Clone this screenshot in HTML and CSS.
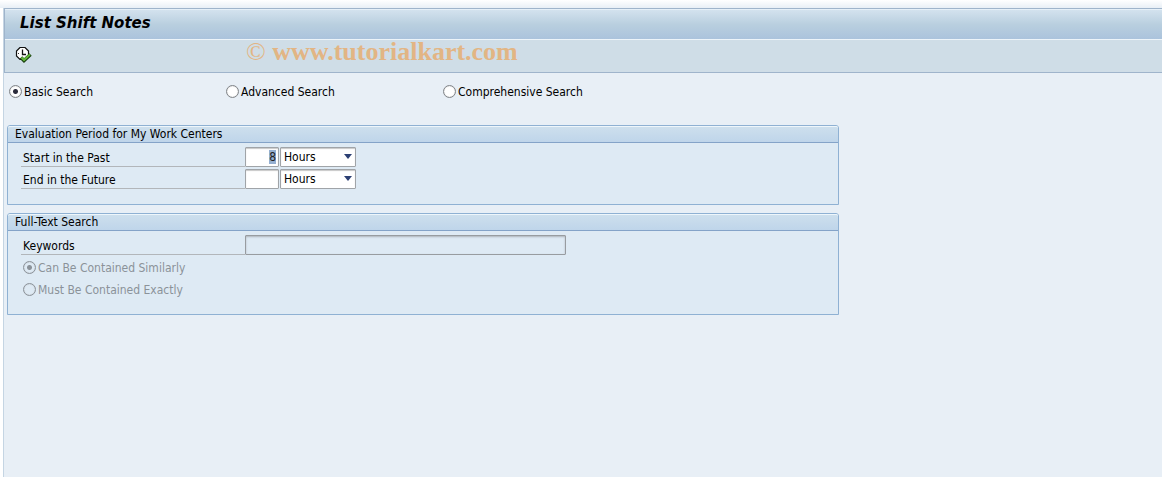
FILE: index.html
```html
<!DOCTYPE html>
<html lang="en">
	<head>
		<meta charset="UTF-8" />
		<meta name="viewport" content="width=device-width, initial-scale=1.0" />
		<title>List Shift Notes</title>
		<link rel="stylesheet" href="styles.css">
	</head>
	<body>
		<div class="window">
			<header class="header">
				<h1 class="title">List Shift Notes</h1>
				<div class="toolbar">
					<button class="execute" type="button" aria-label="Execute">
						<svg width="17" height="16" viewBox="0 0 17 16">
							<path d="M5 .5h5l3.500 3.500v5l-3.500 3.500H5L1.500 9V4z" fill="#fff" stroke="#111" stroke-width="1.200" />
							<path d="M7.500 2.500v5H11" fill="none" stroke="#111" stroke-width="1.300" />
							<path d="M3 6.500h1M7.500 10v1" stroke="#333" />
							<path d="M6 10.500l3 3 6.500-6" fill="none" stroke="#173c0c" stroke-width="3.500" />
							<path d="M6.500 10.500l2.500 2.500 6-5.500" fill="none" stroke="#62b83a" stroke-width="2" />
						</svg>
					</button>
					<span class="watermark">© <b>www.tutorialkart.com</b></span>
				</div>
			</header>

			<form class="content">
				<div class="search-modes">
					<label class="radio"><input type="radio" name="mode" checked>Basic Search</label>
					<label class="radio"><input type="radio" name="mode">Advanced Search</label>
					<label class="radio"><input type="radio" name="mode">Comprehensive Search</label>
				</div>

				<!-- Evaluation period -->
				<section class="panel">
					<h2 class="panel-title">Evaluation Period for My Work Centers</h2>
					<div class="panel-body">
						<div class="row">
							<label class="row-label" for="start">Start in the Past</label>
							<span class="field number"><input id="start" type="text" value="8"></span>
							<span class="field unit">
								<select aria-label="Start unit"><option>Hours</option></select>
							</span>
						</div>
						<div class="row">
							<label class="row-label" for="end">End in the Future</label>
							<span class="field number"><input id="end" type="text"></span>
							<span class="field unit">
								<select aria-label="End unit"><option>Hours</option></select>
							</span>
						</div>
					</div>
				</section>

				<!-- Full-text search -->
				<section class="panel">
					<h2 class="panel-title">Full-Text Search</h2>
					<div class="panel-body">
						<div class="row">
							<label class="row-label" for="keywords">Keywords</label>
							<span class="field keywords"><input id="keywords" type="text" disabled></span>
						</div>
						<label class="radio disabled"><input type="radio" name="match" checked disabled>Can Be Contained Similarly</label>
						<label class="radio disabled"><input type="radio" name="match" disabled>Must Be Contained Exactly</label>
					</div>
				</section>
			</form>
		</div>
		<script>
			// start value is preselected so it can be typed over
			document.getElementById("start").select();
		</script>
	</body>
</html>
```
FILE: styles.css
```css
* {
	box-sizing: border-box;
}

body {
	margin: 0;
	background: linear-gradient(#fff, #e8eff6 8px) no-repeat #fff;
	background-size: 100% 8px;
	padding: 8px 0 0 3px;
	font: 12px/16px "DejaVu Sans Condensed", "Noto Sans", sans-serif;
	color: #000;
}

.window {
	min-height: calc(100vh - 8px);
	border-left: 1px solid #c5d5e3;
	background: #e8eff6;
}

.header {
	border: solid #9fb4cb;
	border-width: 1px 0 1px 1px;
	background: #cfdde7;
}

.title {
	height: 30px;
	margin: 0;
	padding-left: 15px;
	border-top: 1px solid #e6f0f8;
	background: linear-gradient(#d3e2ee, #b9cfdf 50%, #abc3dc);
	font: italic bold 15px/26px "DejaVu Sans", sans-serif;
}

.toolbar {
	display: flex;
	align-items: flex-start;
	height: 33px;
	border-top: 1px solid #edf4f9;
}

.execute {
	width: 17px;
	height: 16px;
	margin: 7px 0 0 10px;
	padding: 0;
	border: 0;
	background: none;
}

.execute svg {
	display: block;
}

.watermark {
	margin-left: 214px;
	color: #e2b584;
	font: 26px/24px "Liberation Serif", serif;
}

.content {
	padding: 11px 3px;
}

.search-modes {
	display: grid;
	grid-template-columns: repeat(3, 217px);
	margin-bottom: 25px;
	padding-left: 2px;
}

.radio {
	display: flex;
	align-items: flex-start;
	gap: 2px;
}

.radio input {
	appearance: none;
	width: 13px;
	height: 13px;
	margin: 1px 0 0;
	border: 1px solid #808488;
	border-radius: 50%;
	background: #fff;
	box-shadow: inset 0 0 1px #aaa;
}

.radio input:checked {
	background: radial-gradient(circle, #2c2c3c 2px, #fff 3px);
}

.panel {
	max-width: 832px;
	margin-bottom: 8px;
	border: 1px solid #8fb1d3;
	border-radius: 3px 3px 0 0;
	background: #deeaf4;
}

.panel-title {
	height: 17px;
	margin: 0;
	padding-left: 7px;
	border-top: 1px solid #eef6fb;
	border-bottom: 1px solid #84a3c8;
	border-radius: 2px 2px 0 0;
	background: linear-gradient(#cddfed, #bfd5ea);
	font-size: 12px;
	font-weight: normal;
	line-height: 14px;
}

.panel-body {
	padding: 4px 13px 13px;
}

.row {
	display: flex;
	height: 20px;
	margin-bottom: 2px;
}

.row-label {
	width: 224px;
	padding: 3px 2px 0;
	border-bottom: 1px solid #b2b6ba;
	line-height: 16px;
}

.field {
	position: relative;
	height: 20px;
}

.field input,
.field select {
	display: block;
	width: 100%;
	height: 100%;
	margin: 0;
	padding: 0 3px;
	appearance: none;
	border: 1px solid #a0a4a8;
	border-radius: 1px;
	outline: none;
	background: #fff;
	box-shadow: inset 0 1px 1px #c8c8c8;
	color: #000;
	font: inherit;
}

.number {
	width: 34px;
	margin-right: 1px;
}

.number input {
	padding-right: 2px;
	text-align: right;
}

.field input::selection {
	background: #94afd1;
	color: #222;
}

.unit {
	width: 76px;
}

.unit::after {
	content: "";
	position: absolute;
	top: 7px;
	right: 4px;
	border: solid transparent;
	border-width: 5px 4px 0;
	border-top-color: #2b3f73;
	pointer-events: none;
}

.keywords {
	width: 321px;
}

.field input:disabled {
	border-color: #989ca0;
	background: #deeaf4;
	box-shadow: inset 0 1px 2px #aeb4ba;
}

.radio.disabled {
	height: 22px;
	padding: 3px 0 0 2px;
	color: #8b9299;
}

.radio.disabled input {
	border-color: #8b9299;
	background: #deeaf4;
}

.radio.disabled input:checked {
	background: radial-gradient(circle, #8b9299 2px, #deeaf4 3px);
}
```
